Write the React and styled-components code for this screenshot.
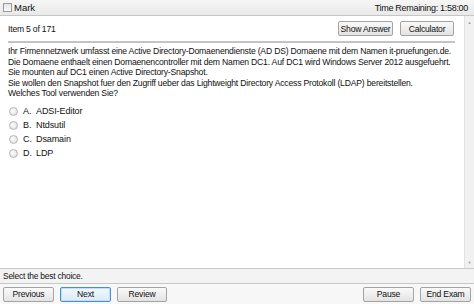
import React from 'react'
import styled, { createGlobalStyle } from 'styled-components'

const Global = createGlobalStyle`
  html, body { margin: 0; padding: 0; background: #fff; }
  body { font-family: "Liberation Sans", Arial, sans-serif; }
`

const options = [
  { letter: 'A.', text: 'ADSI-Editor' },
  { letter: 'B.', text: 'Ntdsutil' },
  { letter: 'C.', text: 'Dsamain' },
  { letter: 'D.', text: 'LDP' },
]

const question = [
  'Ihr Firmennetzwerk umfasst eine Active Directory-Domaenendienste (AD DS) Domaene mit dem Namen it-pruefungen.de.',
  'Die Domaene enthaelt einen Domaenencontroller mit dem Namen DC1. Auf DC1 wird Windows Server 2012 ausgefuehrt.',
  'Sie mounten auf DC1 einen Active Directory-Snapshot.',
  'Sie wollen den Snapshot fuer den Zugriff ueber das Lightweight Directory Access Protokoll (LDAP) bereitstellen.',
  'Welches Tool verwenden Sie?',
]

function App() {
  return (
    <Screen>
      <Global />
      <TopBar>
        <MarkBox>
          <Check />
          <span>Mark</span>
        </MarkBox>
        <Timer>Time Remaining: 1:58:00</Timer>
      </TopBar>
      <Main>
        <Content>
          <HeaderRow>
            <span>Item 5 of 171</span>
            <ButtonGroup>
              <Button w={55}>Show Answer</Button>
              <Button w={54}>Calculator</Button>
            </ButtonGroup>
          </HeaderRow>
          <Rule />
          <Question>
            {question.map((l, i) => <div key={i}>{l}</div>)}
          </Question>
          <Options>
            {options.map(o => (
              <Option key={o.letter}>
                <Radio />
                <Letter>{o.letter}</Letter>
                <span>{o.text}</span>
              </Option>
            ))}
          </Options>
        </Content>
        <Scrollbar>
          <Arrow>▲</Arrow>
          <Arrow>▼</Arrow>
        </Scrollbar>
      </Main>
      <Status>Select the best choice.</Status>
      <BottomBar>
        <ButtonGroup gap={6}>
          <Button w={51}>Previous</Button>
          <Button w={51} active>Next</Button>
          <Button w={50}>Review</Button>
        </ButtonGroup>
        <ButtonGroup gap={6}>
          <Button w={51}>Pause</Button>
          <Button w={51}>End Exam</Button>
        </ButtonGroup>
      </BottomBar>
    </Screen>
  )
}

export default App

const Screen = styled.div`
  width: 474px;
  height: 304px;
  display: flex;
  flex-direction: column;
  font-size: 8.6px;
  letter-spacing: -0.2px;
  color: #111;
  overflow: hidden;
  white-space: nowrap;
`
const TopBar = styled.div`
  height: 15px;
  flex: none;
  display: flex;
  align-items: center;
  justify-content: space-between;
  padding: 0 6px 0 3px;
  background: linear-gradient(#f6f6f6, #e9e9e9);
  border-bottom: 1px solid #c6c6c6;
  font-size: 9.5px;
  letter-spacing: 0;
`
const Timer = styled.span`
  font-size: 9px;
  letter-spacing: -0.3px;
`
const MarkBox = styled.label`
  display: flex;
  align-items: center;
  gap: 2px;
`
const Check = styled.span`
  width: 7px;
  height: 7px;
  border: 1px solid #9a9a9a;
  background: linear-gradient(#e4e4e4, #fafafa);
`
const Main = styled.div`
  flex: 1;
  display: flex;
  min-height: 0;
`
const Content = styled.div`
  flex: 1;
  min-width: 0;
  padding: 0 8px 0 8px;
`
const HeaderRow = styled.div`
  height: 25px;
  display: flex;
  align-items: center;
  justify-content: space-between;
  padding-right: 2px;
`
const ButtonGroup = styled.div`
  display: flex;
  gap: ${p => p.gap || 7}px;
`
const Button = styled.button`
  width: ${p => p.w}px;
  height: 15px;
  padding: 0;
  font-family: inherit;
  font-size: 8.6px;
  letter-spacing: -0.2px;
  white-space: nowrap;
  color: #111;
  border: 1px solid ${p => (p.active ? '#4a8ed0' : '#a3a3a3')};
  border-radius: 2px;
  background: ${p =>
    p.active
      ? 'linear-gradient(#f2f8fd, #dcebf8)'
      : 'linear-gradient(#fafafa, #e3e3e3)'};
  box-shadow: ${p => (p.active ? 'inset 0 0 0 1px #bfe0f8' : 'none')};
`
const Rule = styled.div`
  height: 2px;
  background: #c4c4c4;
  margin-right: 1px;
`
const Question = styled.div`
  padding-top: 3.3px;
  line-height: 10.4px;
  font-size: 8.65px;
  letter-spacing: -0.2px;
`
const Options = styled.div`
  margin-top: 7px;
  display: flex;
  flex-direction: column;
  gap: 2px;
`
const Option = styled.div`
  height: 12px;
  display: flex;
  align-items: center;
  padding-left: 1px;
  font-size: 9px;
  letter-spacing: -0.1px;
`
const Radio = styled.span`
  width: 7px;
  height: 7px;
  border-radius: 50%;
  border: 1px solid #b5b5b5;
  background: radial-gradient(circle at 40% 40%, #fff, #d8d8d8);
  margin-right: 5px;
`
const Letter = styled.span`
  width: 13px;
`
const Scrollbar = styled.div`
  width: 9px;
  flex: none;
  background: #f1f1f1;
  border-left: 1px solid #e2e2e2;
  display: flex;
  flex-direction: column;
  justify-content: space-between;
  align-items: center;
  padding: 4px 0 3px;
`
const Arrow = styled.span`
  font-size: 4px;
  color: #999;
`
const Status = styled.div`
  height: 14px;
  flex: none;
  display: flex;
  align-items: center;
  padding-left: 3px;
  font-size: 8.4px;
  background: #f3f3f3;
  border-top: 1px solid #c8c8c8;
  border-bottom: 1px solid #c8c8c8;
`
const BottomBar = styled.div`
  height: 20px;
  flex: none;
  display: flex;
  align-items: center;
  justify-content: space-between;
  padding: 0 3px;
  background: #f7f7f7;
`
